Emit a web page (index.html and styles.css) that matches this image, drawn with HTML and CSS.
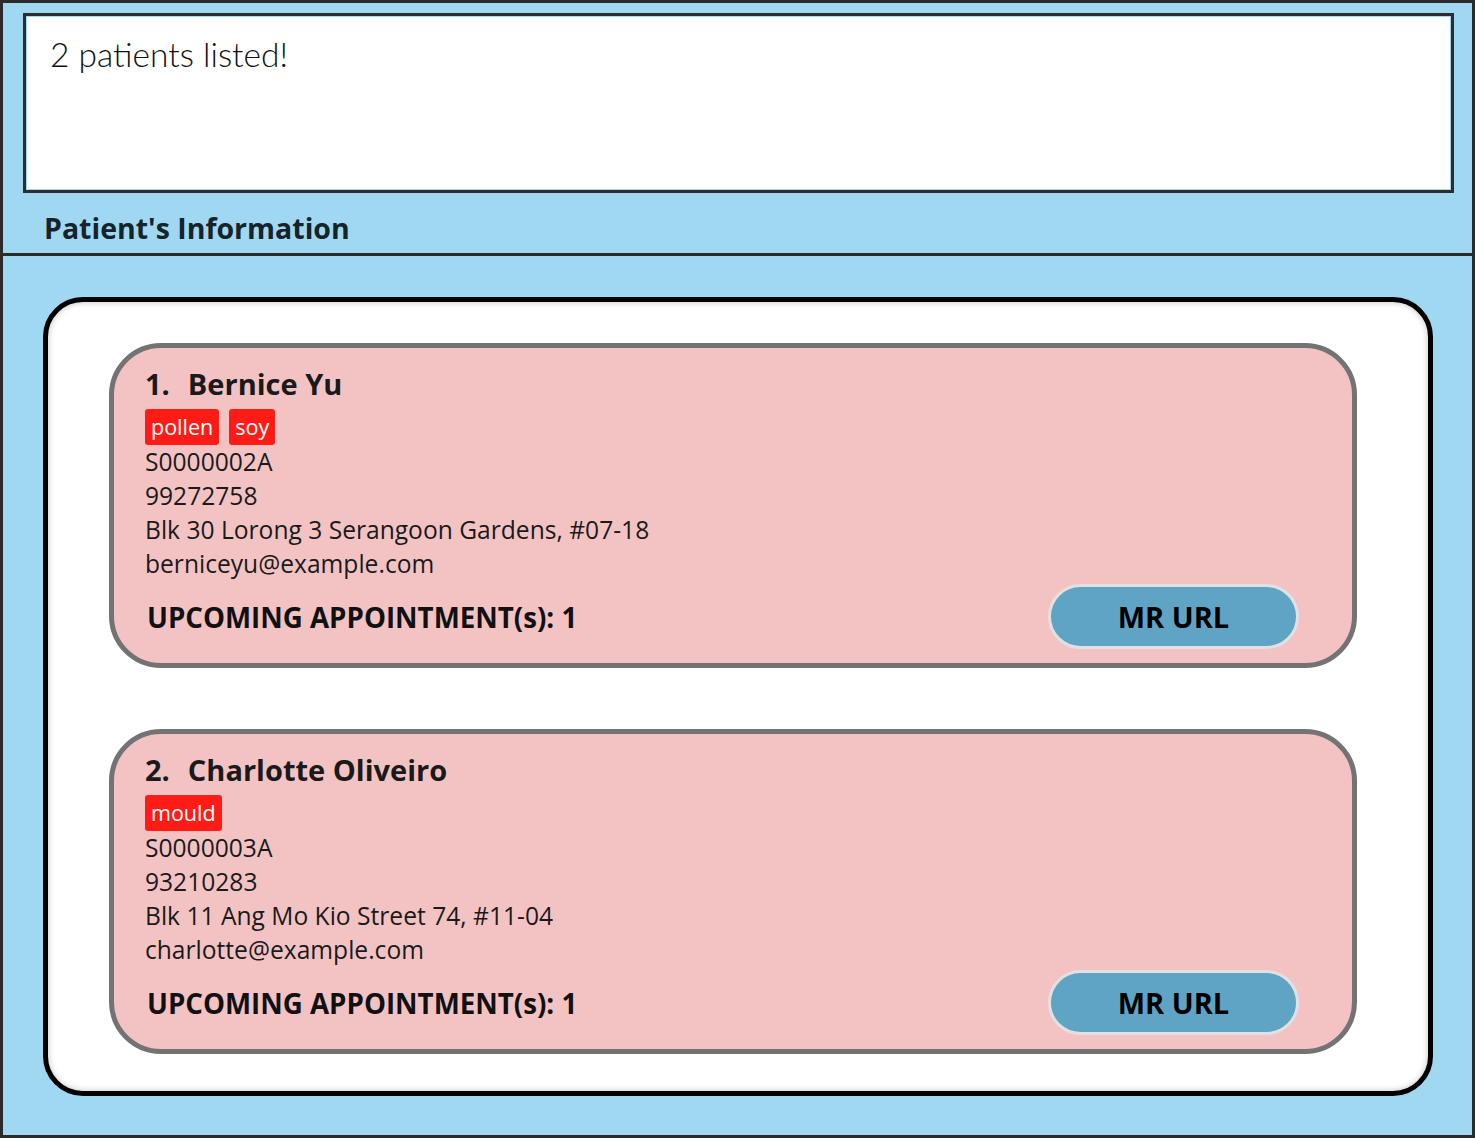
FILE: index.html
```html
<!DOCTYPE html>
<html>
<head>
<meta charset="utf-8">
<link rel="stylesheet" href="styles.css">
</head>
<body>
<div class="app">
  <div class="top">
    <div class="result">
      <div class="result-inner">2 patients listed!</div>
    </div>
    <div class="section-title">Patient's Information</div>
  </div>
  <div class="bottom">
    <div class="panel">
      <div class="card">
        <div class="name"><span class="idx">1.</span>Bernice Yu</div>
        <div class="tags"><span class="tag">pollen</span><span class="tag">soy</span></div>
        <div class="line">S0000002A</div>
        <div class="line">99272758</div>
        <div class="line">Blk 30 Lorong 3 Serangoon Gardens, #07-18</div>
        <div class="line">berniceyu@example.com</div>
        <div class="foot">
          <div class="appt">UPCOMING APPOINTMENT(s): 1</div>
          <div class="btn">MR URL</div>
        </div>
      </div>
      <div class="card">
        <div class="name"><span class="idx">2.</span>Charlotte Oliveiro</div>
        <div class="tags"><span class="tag">mould</span></div>
        <div class="line">S0000003A</div>
        <div class="line">93210283</div>
        <div class="line">Blk 11 Ang Mo Kio Street 74, #11-04</div>
        <div class="line">charlotte@example.com</div>
        <div class="foot">
          <div class="appt">UPCOMING APPOINTMENT(s): 1</div>
          <div class="btn">MR URL</div>
        </div>
      </div>
    </div>
  </div>
</div>
</body>
</html>
```
FILE: styles.css
```css
* { box-sizing: border-box; }
html, body { margin: 0; padding: 0; }
body {
  font-family: "Open Sans", "Noto Sans", sans-serif;
  color: #1c1c1c;
}
.app {
  width: 1475px;
  height: 1138px;
  border: 3px solid #2b2b2b;
  background: #a0d8f2;
  display: flex;
  flex-direction: column;
}
.top {
  padding: 10px 18px 0 20px;
  border-bottom: 3px solid #2b2b2b;
  height: 253px;
}
.result {
  height: 180px;
  border: 3px solid #2d2d2d;
  padding: 1px;
  background: #a0d8f2;
}
.result-inner {
  background: #fff;
  height: 100%;
  padding: 14px 0 0 23px;
  font-family: "Lato", "Open Sans", sans-serif;
  font-weight: 300;
  font-size: 33.5px;
  line-height: 46px;
  color: #111;
}
.section-title {
  padding: 13px 0 0 21px;
  font-size: 28.5px;
  font-weight: 700;
  line-height: 44px;
  color: #17232a;
}
.bottom {
  flex: 1;
  padding: 41px 39px 39px 40px;
}
.panel {
  height: 100%;
  background: #fff;
  border: 5px solid #000;
  border-radius: 40px;
  box-shadow: inset 0 0 6px rgba(0,0,0,0.25);
  padding: 41px 71px 0 61px;
  display: flex;
  flex-direction: column;
  gap: 61px;
}
.card {
  height: 325px;
  background: #f3c3c4;
  border: 5px solid #737373;
  border-radius: 52px;
  padding: 18px 53px 0 31px;
}
.name {
  font-size: 29px;
  font-weight: 700;
  line-height: 36px;
  color: #1a1a1a;
}
.idx { margin-right: 18px; }
.tags {
  margin-top: 7px;
  display: flex;
  gap: 10px;
  height: 36px;
}
.tag {
  background: #ff1c17;
  color: #fff;
  font-size: 21.5px;
  line-height: 36px;
  padding: 0 6px;
  border-radius: 3px;
}
.line {
  font-size: 24.6px;
  line-height: 34px;
  color: #1a1a1a;
}
.foot {
  display: flex;
  justify-content: space-between;
  align-items: center;
  margin-top: 3px;
}
.appt {
  padding-left: 2px;
  font-size: 27.7px;
  font-weight: 700;
  color: #111;
}
.btn {
  width: 251px;
  height: 65px;
  border-radius: 33px;
  border: 3px solid #e1e1e1;
  background: #5fa4c5;
  display: flex;
  align-items: center;
  justify-content: center;
  font-size: 29px;
  font-weight: 700;
  color: #000;
}
```
